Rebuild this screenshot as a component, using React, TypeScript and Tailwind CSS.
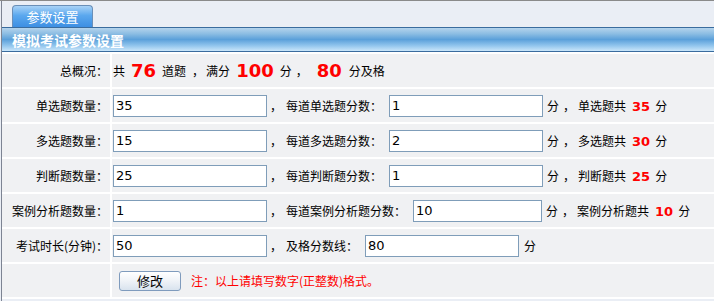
import React from "react";

const cjk = { fontFamily: '"Noto Sans CJK SC", "Liberation Sans", sans-serif' };

function Num({ v, w }: { v: string; w: string }) {
  return (
    <input
      readOnly
      value={v}
      className={`${w} h-[22px] border border-[#7f9db9] bg-white px-[2px] text-[13px] text-black outline-none font-['DejaVu_Sans',sans-serif]`}
    />
  );
}

function Red({ v }: { v: string }) {
  return <span className="font-['DejaVu_Sans',sans-serif] font-bold text-[13px] text-[#ff0000] leading-none">{v}</span>;
}

function Row({ label, children, first }: { label: string; children: React.ReactNode; first?: boolean }) {
  return (
    <div className={`flex h-[35px] border-t-2 border-white`}>
      <div className="w-[110px] shrink-0 flex items-center justify-end pr-[2px] text-[12px] text-black border-r-2 border-white">
        {label}
      </div>
      <div className="flex-1 flex items-center pl-[1px] text-[12px] text-black whitespace-nowrap">{children}</div>
    </div>
  );
}

function ScoreRow({ label, n, perLabel, per, perW, totalLabel, total }: { label: string; n: string; perLabel: string; per: string; perW: string; totalLabel: string; total: string }) {
  return (
    <Row label={label}>
      <Num v={n} w="w-[154px]" />
      <span className="ml-[3px]">，</span>
      <span className="ml-[4px]">{perLabel}</span>
      <span className="ml-[7px] flex"><Num v={per} w={perW} /></span>
      <span className="ml-[4px]">分</span>
      <span className="ml-[4px]">，</span>
      <span className="ml-[3px]">{totalLabel}</span>
      <span className="ml-[6px]"><Red v={total} /></span>
      <span className="ml-[5px]">分</span>
    </Row>
  );
}

export default function App() {
  return (
    <div className="w-[714px] h-[301px] overflow-hidden bg-[#eaeef5] border-t border-[#8a8a8a]" style={cjk}>
      <div className="ml-px h-full border-l border-[#7d8493] flex flex-col">
        {/* tab strip */}
        <div className="h-[26px] pl-[10px] pt-[4px] flex">
          <div className="w-[81px] h-[22px] rounded-t-[4px] border border-b-0 border-[#6a8fb8] bg-[linear-gradient(#a9d3f7,#5ba8ee_45%,#3d8fe3)] flex items-center justify-center text-white text-[13px] leading-none">
            参数设置
          </div>
        </div>
        {/* header bar */}
        <div className="h-[25px] border-y border-[#3a6c9e] bg-[linear-gradient(#b4d3ec,#8cbde3_25%,#5ba0da_50%,#8ec3ec_75%,#cae6fa)] flex items-center pl-[10px] text-white font-bold text-[14px] leading-none">
          模拟考试参数设置
        </div>
        {/* table */}
        <div className="bg-[#f0f1f3]">
          <Row label="总概况：">
            <span>共</span>
            <span className="ml-[6px] font-['DejaVu_Sans',sans-serif] font-bold text-[18px] text-[#ff0000] leading-none">76</span>
            <span className="ml-[6px]">道题</span>
            <span className="ml-[6px]">，</span>
            <span className="ml-[2px]">满分</span>
            <span className="ml-[6px] font-['DejaVu_Sans',sans-serif] font-bold text-[18px] text-[#ff0000] leading-none">100</span>
            <span className="ml-[6px]">分</span>
            <span className="ml-[4px]">，</span>
            <span className="ml-[9px] font-['DejaVu_Sans',sans-serif] font-bold text-[18px] text-[#ff0000] leading-none">80</span>
            <span className="ml-[7px]">分及格</span>
          </Row>
          <ScoreRow label="单选题数量：" n="35" perLabel="每道单选题分数：" per="1" perW="w-[154px]" totalLabel="单选题共" total="35" />
          <ScoreRow label="多选题数量：" n="15" perLabel="每道多选题分数：" per="2" perW="w-[154px]" totalLabel="多选题共" total="30" />
          <ScoreRow label="判断题数量：" n="25" perLabel="每道判断题分数：" per="1" perW="w-[154px]" totalLabel="判断题共" total="25" />
          <ScoreRow label="案例分析题数量：" n="1" perLabel="每道案例分析题分数：" per="10" perW="w-[129px]" totalLabel="案例分析题共" total="10" />
          <Row label="考试时长(分钟)：">
            <Num v="50" w="w-[154px]" />
            <span className="ml-[3px]">，</span>
            <span className="ml-[4px]">及格分数线：</span>
            <span className="ml-[7px] flex"><Num v="80" w="w-[154px]" /></span>
            <span className="ml-[5px]">分</span>
          </Row>
          <Row label="">
            <button className="ml-[6px] w-[62px] h-[20px] rounded-[3px] border border-[#7f9bbd] bg-[linear-gradient(#ffffff,#f1f4f8_45%,#d9e3ee)] text-[13px] text-black leading-none flex items-center justify-center">
              修改
            </button>
            <span className="ml-[10px] text-[#ff0000]">注：以上请填写数字(正整数)格式。</span>
          </Row>
          <div className="h-[2px] bg-white" />
        </div>
      </div>
    </div>
  );
}
